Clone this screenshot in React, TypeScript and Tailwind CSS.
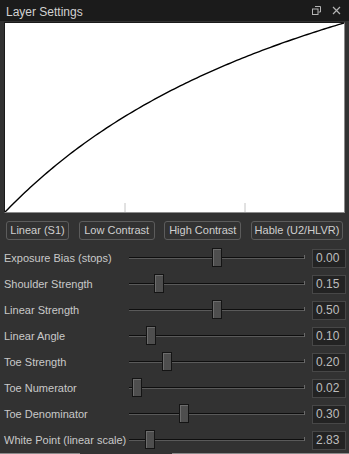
import React from 'react';

const W = 2.83;
const hable = (x: number) => {
  const A = 0.15, B = 0.5, C = 0.1, D = 0.2, E = 0.02, F = 0.3;
  return (x * (A * x + C * B) + D * E) / (x * (A * x + B) + D * F) - E / F;
};

const GW = 339;
const GH = 189;

function curvePoints() {
  const top = hable(W);
  const pts: string[] = [];
  for (let i = 0; i <= 120; i++) {
    const x = (i / 120) * W;
    const y = hable(x) / top;
    pts.push(`${((x / W) * GW).toFixed(2)},${(GH - y * GH).toFixed(2)}`);
  }
  return pts.join(' ');
}

const presets = [
  { label: 'Linear (S1)', w: 'w-[63px]' },
  { label: 'Low Contrast', w: 'w-[76px]' },
  { label: 'High Contrast', w: 'w-[77px]' },
  { label: 'Hable (U2/HLVR)', w: 'w-[92px]' },
];

const params = [
  { label: 'Exposure Bias (stops)', value: '0.00', pos: 0.5 },
  { label: 'Shoulder Strength', value: '0.15', pos: 0.15 },
  { label: 'Linear Strength', value: '0.50', pos: 0.5 },
  { label: 'Linear Angle', value: '0.10', pos: 0.1 },
  { label: 'Toe Strength', value: '0.20', pos: 0.2 },
  { label: 'Toe Numerator', value: '0.02', pos: 0.02 },
  { label: 'Toe Denominator', value: '0.30', pos: 0.3 },
  { label: 'White Point (linear scale)', value: '2.83', pos: 0.097 },
];

function SliderRow({ label, value, pos }: { label: string; value: string; pos: number }) {
  return (
    <div className="flex items-center h-[26px]">
      <div className="w-[129px] pl-[4px] text-[11px] whitespace-nowrap">{label}</div>
      <div className="relative w-[176px] h-full">
        <div className="absolute left-0 right-0 top-[12px] h-[2px] border-t border-[#0e0e0e] bg-[#5a5a5a]" />
        <div className="absolute right-0 top-[10px] w-[1px] h-[4px] bg-[#6a6a6a]" />
        <div
          className="absolute top-[3px] w-[10px] h-[19px] bg-[#4e4e4e] border border-[#141414] shadow-[inset_1px_1px_0_#6c6c6c]"
          style={{ left: `${pos * 166}px` }}
        />
      </div>
      <div className="ml-[7px] w-[34px] h-[19px] bg-[#232323] border border-[#474747] pl-[3px] text-[12px] leading-[17px] text-[#bdbdbd]">
        {value}
      </div>
    </div>
  );
}

export default function App() {
  return (
    <div
      className="w-[349px] h-[454px] bg-[#323232] text-[#c9c9c9] overflow-hidden flex flex-col"
      style={{ fontFamily: '"Liberation Sans", Arial, sans-serif' }}
    >
      <div className="h-[21px] bg-[#1b1b1b] flex items-center pl-[6px] pr-[8px] shrink-0">
        <span className="text-[12px] text-[#d2d2d2] pt-[2px]">Layer Settings</span>
        <div className="ml-auto flex items-center gap-[11px] text-[#b4b4b4]">
          <svg width="9" height="9" viewBox="0 0 9 9" fill="none" stroke="currentColor" strokeWidth="1">
            <path d="M3 0.5h5.5v5.5H6.5" />
            <rect x="0.5" y="3" width="5.5" height="5.5" />
          </svg>
          <svg width="9" height="9" viewBox="0 0 9 9" stroke="currentColor" strokeWidth="1.2">
            <path d="M1 1l7 7M8 1l-7 7" />
          </svg>
        </div>
      </div>

      <div className="mx-[4px] mt-[1px] h-[191px] bg-white border border-t-[#1a1a1a] border-l-[#1a1a1a] border-r-[#8c8c8c] border-b-[#8c8c8c] shrink-0">
        <svg width={GW} height={GH} viewBox={`0 0 ${GW} ${GH}`} className="block">
          <line x1="120" y1={GH - 9} x2="120" y2={GH} stroke="#c4c4c4" strokeWidth="1" />
          <line x1="240" y1={GH - 9} x2="240" y2={GH} stroke="#c4c4c4" strokeWidth="1" />
          <polyline points={curvePoints()} fill="none" stroke="#000" strokeWidth="1.4" />
        </svg>
      </div>

      <div className="flex justify-between px-[6px] mt-[8px] shrink-0">
        {presets.map((p) => (
          <div
            key={p.label}
            className={`${p.w} h-[19px] border border-[#5c5c5c] rounded-[3px] flex items-center justify-center text-[11px] text-[#cfcfcf] whitespace-nowrap`}
          >
            {p.label}
          </div>
        ))}
      </div>

      <div className="mt-[5px] flex flex-col">
        {params.map((p) => (
          <SliderRow key={p.label} {...p} />
        ))}
      </div>

      <div className="flex h-[1px]">
        <div className="w-[80px] bg-[#8a8a8a]" />
        <div className="w-[92px]" />
        <div className="flex-1 bg-[#8a8a8a]" />
      </div>
    </div>
  );
}
